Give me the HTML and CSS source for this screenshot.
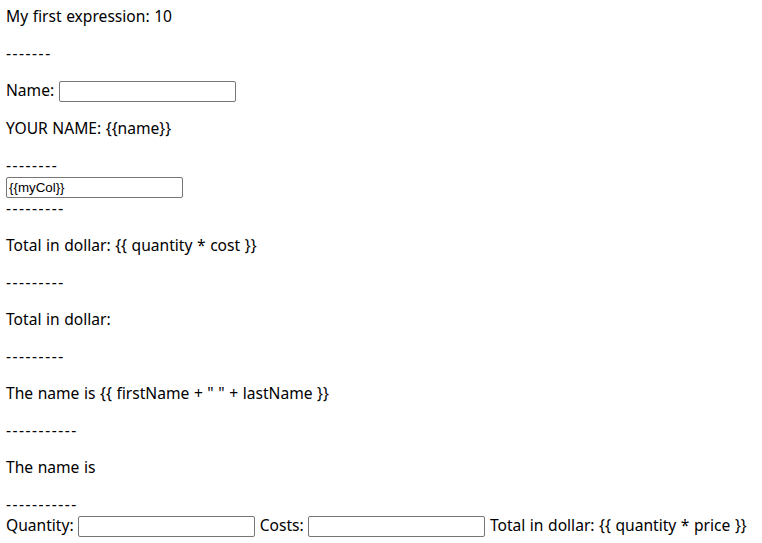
FILE: index.html
```html
<!DOCTYPE html>
<html>
<head>
<meta charset="utf-8">
<title>AngularJS expressions</title>
<link rel="stylesheet" href="styles.css">
</head>
<body class="page">
<div class="app">
  <div class="line">My first expression: 10</div>
  <p class="para dashes">-------</p>
  <p class="para">Name: <input class="field" type="text"></p>
  <p class="para">YOUR NAME: {{name}}</p>
  <p class="para"><span class="dashes">--------</span><br><input class="field" type="text" value="{{myCol}}"><br><span class="dashes">---------</span></p>
  <p class="para">Total in dollar: {{ quantity * cost }}</p>
  <p class="para dashes">---------</p>
  <p class="para">Total in dollar: </p>
  <p class="para dashes">---------</p>
  <p class="para">The name is {{ firstName + " " + lastName }}</p>
  <p class="para dashes">-----------</p>
  <p class="para">The name is </p>
  <p class="para para-tight dashes">-----------</p>
  <div class="line">Quantity: <input class="field" type="number"> Costs: <input class="field" type="number"> Total in dollar: {{ quantity * price }}</div>
</div>
</body>
</html>
```
FILE: styles.css
```css
.page {
  margin: 0;
  padding: 6px 6px 4px;
  background: #fff;
  color: #000;
  font-family: "Noto Sans", "Open Sans", "Noto Sans CJK KR", sans-serif;
  font-size: 15.6px;
  line-height: 21px;
  word-spacing: 0.5px;
}

.app {
  display: block;
}

.line {
  margin: 0;
}

.para {
  margin: 16px 0;
}

.para-tight {
  margin-bottom: 0;
}

.dashes {
  letter-spacing: 1.5px;
}

.field {
  box-sizing: border-box;
  width: 177px;
  height: 21px;
  margin: 0;
  padding: 1px 2px;
  border: 1px solid #767676;
  border-radius: 2px;
  background: #fff;
  color: #000;
  font-family: "Liberation Sans", Arial, sans-serif;
  font-size: 13.333px;
  line-height: normal;
  word-spacing: normal;
  letter-spacing: normal;
}

.field[type="number"]::-webkit-inner-spin-button,
.field[type="number"]::-webkit-outer-spin-button {
  -webkit-appearance: none;
  margin: 0;
}
```
